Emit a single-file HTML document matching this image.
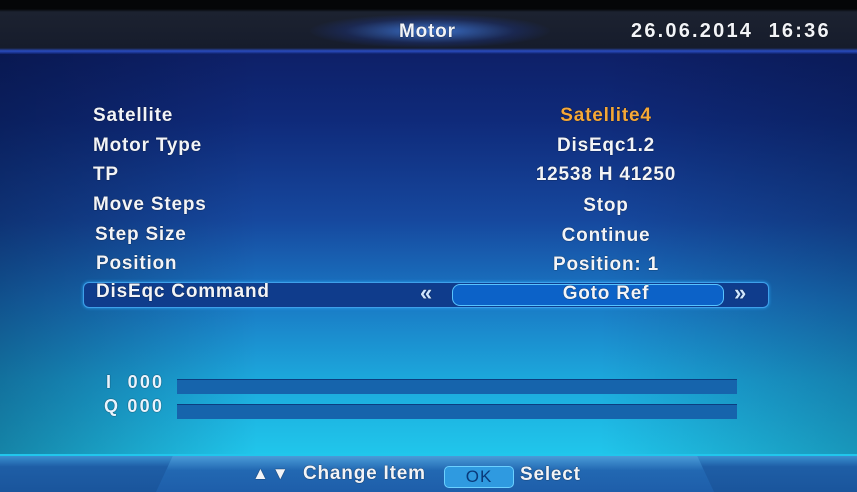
<!DOCTYPE html>
<html><head><meta charset="utf-8"><style>
html,body{margin:0;padding:0}
body{width:857px;height:492px;overflow:hidden;position:relative;font-family:"Liberation Sans",sans-serif;font-weight:bold;color:#f2f4f8;
background:linear-gradient(180deg,#050608 0,#050608 9px,#1c2230 12px,#161c2c 48px,#2a4cc0 51px,#0e2068 54px,#0f2a7a 120px,#16489e 220px,#1a78c4 300px,#1ca8dc 380px,#20c4ea 450px,#22c8ee 460px);}
.shade{position:absolute;left:0;top:54px;width:857px;height:400px;background:linear-gradient(90deg,rgba(0,10,40,.35),rgba(0,0,0,0) 30%,rgba(0,0,0,0) 70%,rgba(0,10,40,.25));}
.t{position:absolute;font-size:19px;letter-spacing:0.8px;white-space:nowrap;text-shadow:0 0 1px #000}
.c{position:absolute;left:456px;width:300px;text-align:center;font-size:19px;letter-spacing:0.8px;white-space:nowrap;text-shadow:0 0 1px #000}
.glow{position:absolute;left:310px;top:14px;width:240px;height:34px;border-radius:50%;background:radial-gradient(ellipse at center,rgba(70,140,255,.75),rgba(30,60,160,.3) 50%,rgba(0,0,0,0) 72%)}
.sel{position:absolute;left:83px;top:282px;width:684px;height:24px;border-radius:6px;background:#0f3c8c;border:1px solid #3ea0ea;box-shadow:0 0 3px #2aa0f0}
.val{position:absolute;left:452px;top:284px;width:270px;height:20px;border-radius:8px;background:#0c62c8;border:1px solid #58c4ff}
.bar{position:absolute;left:177px;width:560px;height:14px;background:#1664ac;border-top:1px solid #0c3e80}
.foot{position:absolute;left:0;top:456px;width:857px;height:36px;background:linear-gradient(180deg,#3a90d0,#1e5ea6 30%,#1a559c)}
.trap{position:absolute;left:156px;top:456px;width:558px;height:36px;background:linear-gradient(180deg,#4a9cd8,#2268b2 40%,#1e5eaa);clip-path:polygon(3% 0,97% 0,100% 100%,0 100%)}
.ok{position:absolute;left:444px;top:466px;width:68px;height:20px;border-radius:5px;background:#2f9ae0;border:1px solid #6cd0ff;color:#0a3a7a;font-weight:normal;font-size:17px;letter-spacing:1px;text-align:center;line-height:20px}
</style></head><body>
<div class="shade"></div>
<div class="glow"></div>
<div class="t" style="left:399px;top:21px">Motor</div>
<div class="t" style="left:631px;top:20px;font-size:20px;letter-spacing:2.2px">26.06.2014&nbsp; 16:36</div>

<div class="t" style="left:93px;top:105px">Satellite</div>
<div class="c" style="top:105px;color:#f5a838">Satellite4</div>
<div class="t" style="left:93px;top:135px">Motor Type</div>
<div class="c" style="top:135px">DisEqc1.2</div>
<div class="t" style="left:93px;top:164px">TP</div>
<div class="c" style="top:164px">12538 H 41250</div>
<div class="t" style="left:93px;top:194px">Move Steps</div>
<div class="c" style="top:195px">Stop</div>
<div class="t" style="left:95px;top:224px">Step Size</div>
<div class="c" style="top:225px">Continue</div>
<div class="t" style="left:96px;top:253px">Position</div>
<div class="c" style="top:254px">Position: 1</div>

<div class="sel"></div>
<div class="val"></div>
<div class="t" style="left:96px;top:281px">DisEqc Command</div>
<div class="t" style="left:420px;top:280px;font-size:22px;color:#cfe6ff">«</div>
<div class="c" style="top:283px">Goto Ref</div>
<div class="t" style="left:734px;top:280px;font-size:22px;color:#cfe6ff">»</div>

<div class="t" style="left:106px;top:372px;font-size:18px;color:#e8f4ff;letter-spacing:2.2px">I&nbsp;&nbsp;000</div>
<div class="bar" style="top:379px"></div>
<div class="t" style="left:104px;top:396px;font-size:18px;color:#e8f4ff;letter-spacing:2.2px">Q 000</div>
<div class="bar" style="top:404px"></div>

<div class="foot"></div>
<div class="trap"></div>
<div class="t" style="left:252px;top:464px;font-size:17px;letter-spacing:3px">▲▼</div>
<div class="t" style="left:303px;top:463px">Change Item</div>
<div class="ok">OK</div>
<div class="t" style="left:520px;top:464px">Select</div>
</body></html>
